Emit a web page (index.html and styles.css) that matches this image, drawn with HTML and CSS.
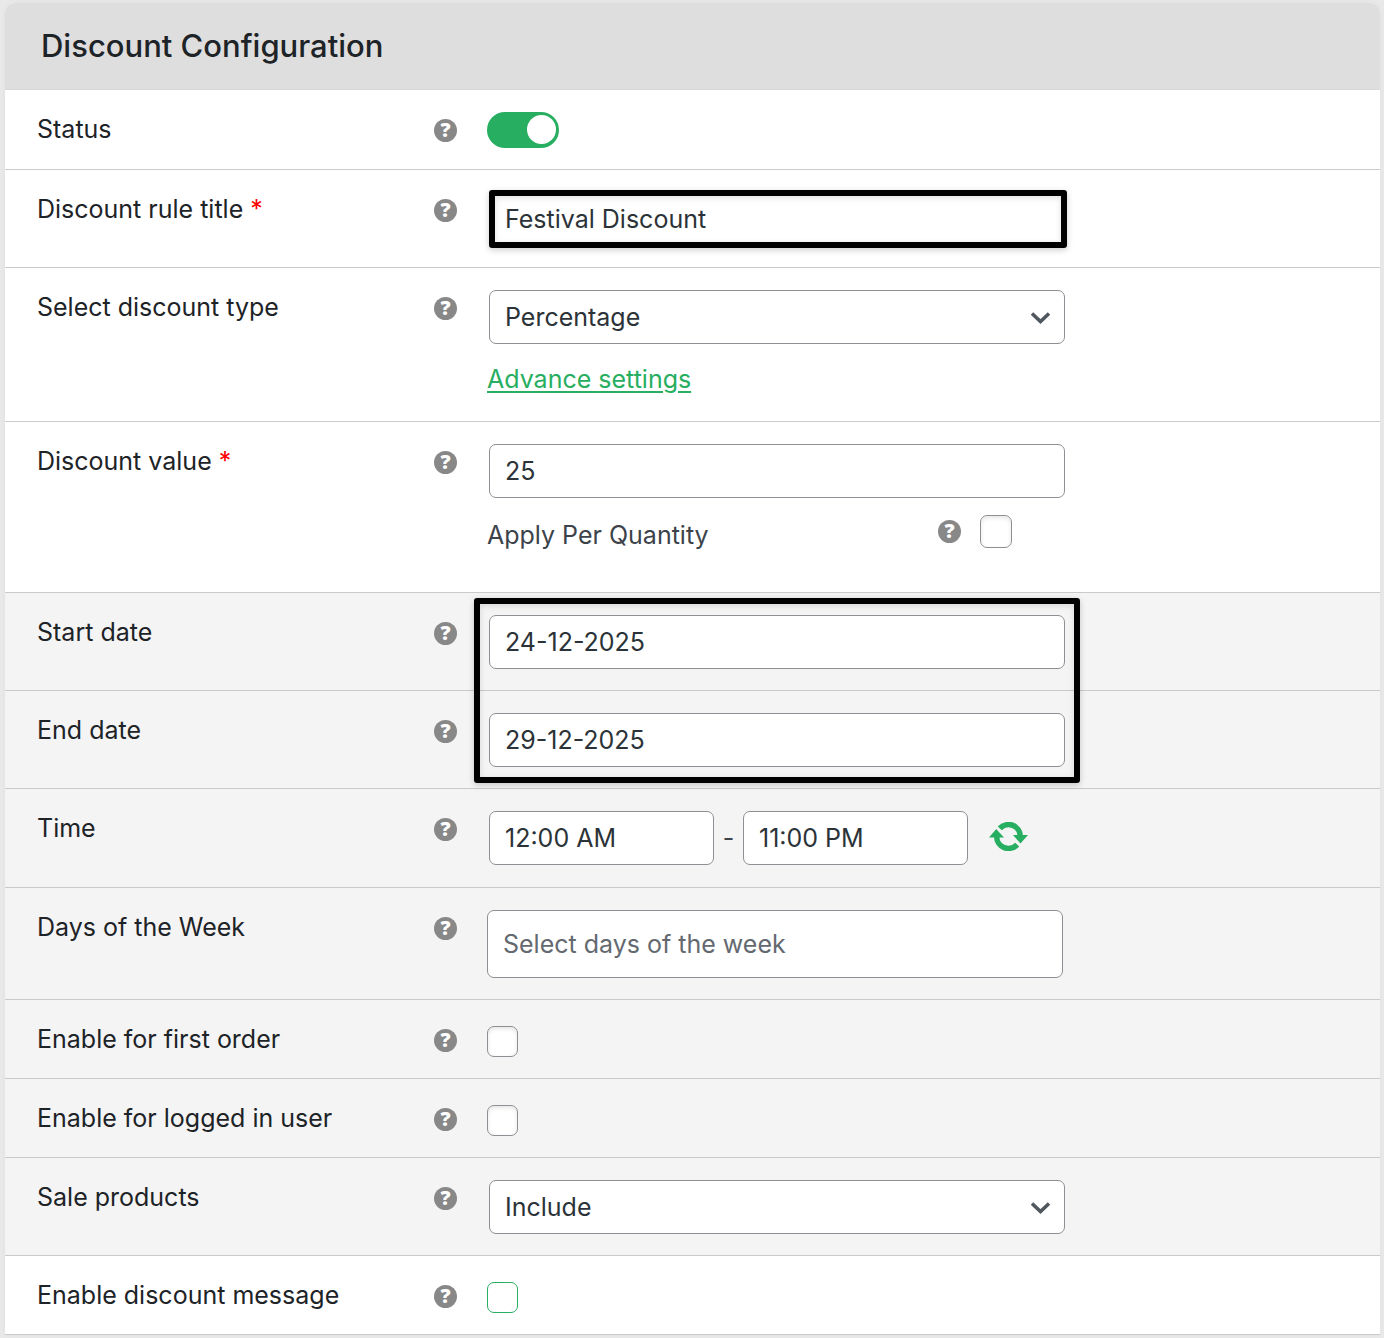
FILE: index.html
```html
<!DOCTYPE html>
<html lang="en">

<head>
    <meta charset="utf-8">
    <meta name="viewport" content="width=device-width, initial-scale=1">
    <title>Discount Configuration</title>
    <link rel="stylesheet" href="styles.css">
</head>

<body>
    <form class="panel">
        <h1 class="panel-title">Discount Configuration</h1>

        <div class="row">
            <label class="label" for="status">Status</label>
            <span class="help">?</span>
            <div class="field">
                <input type="checkbox" class="switch" id="status" checked>
            </div>
        </div>

        <div class="row">
            <label class="label" for="title">Discount rule title <span class="required">*</span></label>
            <span class="help">?</span>
            <div class="field">
                <div class="control">
                    <input type="text" class="input" id="title" value="Festival Discount">
                    <span class="frame frame-title"></span>
                </div>
            </div>
        </div>

        <div class="row">
            <label class="label" for="type">Select discount type</label>
            <span class="help">?</span>
            <div class="field">
                <div class="control">
                    <select class="input" id="type">
                        <option>Percentage</option>
                        <option>Fixed</option>
                    </select>
                    <svg class="chevron" viewBox="0 0 20 12"><path d="M1 1.5 9.500 9.500 18 1.5" fill="none" stroke="#50575e" stroke-width="3.600"/></svg>
                </div>
                <a class="advance" href="#">Advance settings</a>
            </div>
        </div>

        <div class="row">
            <label class="label" for="value">Discount value <span class="required">*</span></label>
            <span class="help">?</span>
            <div class="field">
                <div class="control">
                    <input type="text" class="input" id="value" value="25">
                </div>
                <div class="per-quantity">
                    <label for="quantity">Apply Per Quantity</label>
                    <span class="help">?</span>
                    <input type="checkbox" class="check" id="quantity">
                </div>
            </div>
        </div>

        <div class="row shaded">
            <label class="label" for="start">Start date</label>
            <span class="help">?</span>
            <div class="field">
                <div class="control">
                    <input type="text" class="input" id="start" value="24-12-2025">
                    <!-- goes round both date fields -->
                    <span class="frame frame-dates"></span>
                </div>
            </div>
        </div>

        <div class="row shaded">
            <label class="label" for="end">End date</label>
            <span class="help">?</span>
            <div class="field">
                <div class="control">
                    <input type="text" class="input" id="end" value="29-12-2025">
                </div>
            </div>
        </div>

        <div class="row shaded">
            <label class="label" for="time-from">Time</label>
            <span class="help">?</span>
            <div class="field">
                <div class="times">
                    <input type="text" class="input time" id="time-from" value="12:00 AM">
                    <span class="dash">-</span>
                    <input type="text" class="input time" id="time-to" value="11:00 PM" aria-label="Time to">
                    <button type="button" class="reset" aria-label="Reset time">
                        <svg viewBox="0 0 39 29">
                            <g fill="none" stroke="#27ae60" stroke-width="5.5">
                                <path d="M10.800 6.400A11.800 11.800 0 0 1 31.300 14.500"/>
                                <path d="M28.200 22.600A11.800 11.800 0 0 1 7.700 14.500"/>
                            </g>
                            <path d="M24 13H39L31.500 21.500zM0 15.500H15L7.200 7z" fill="#27ae60"/>
                        </svg>
                    </button>
                </div>
            </div>
        </div>

        <div class="row shaded">
            <label class="label" for="days">Days of the Week</label>
            <span class="help">?</span>
            <div class="field">
                <input type="text" class="input days" id="days" placeholder="Select days of the week">
            </div>
        </div>

        <div class="row shaded">
            <label class="label" for="first-order">Enable for first order</label>
            <span class="help">?</span>
            <div class="field">
                <input type="checkbox" class="check" id="first-order">
            </div>
        </div>

        <div class="row shaded">
            <label class="label" for="logged-in">Enable for logged in user</label>
            <span class="help">?</span>
            <div class="field">
                <input type="checkbox" class="check" id="logged-in">
            </div>
        </div>

        <div class="row shaded">
            <label class="label" for="sale">Sale products</label>
            <span class="help">?</span>
            <div class="field">
                <div class="control">
                    <select class="input" id="sale">
                        <option>Include</option>
                        <option>Exclude</option>
                    </select>
                    <svg class="chevron" viewBox="0 0 20 12"><path d="M1 1.5 9.500 9.500 18 1.5" fill="none" stroke="#50575e" stroke-width="3.600"/></svg>
                </div>
            </div>
        </div>

        <div class="row">
            <label class="label" for="message">Enable discount message</label>
            <span class="help">?</span>
            <div class="field">
                <input type="checkbox" class="check check-green" id="message">
            </div>
        </div>
    </form>
</body>

</html>
```

FILE: styles.css
```css
* {
    box-sizing: border-box;
}

body {
    margin: 0;
    padding: 3px 4px 3px 5px;
    background: #e9e9e9;
    color: #1d2327;
    font-family: Inter, "Liberation Sans", sans-serif;
    font-size: 25px;
    line-height: 34px;
}

.panel {
    background: #fff;
    border-radius: 10px 10px 0 0;
    box-shadow: 0 0 6px rgba(0, 0, 0, 0.04);
}

.panel-title {
    margin: 0;
    padding: 23px 36px;
    border-bottom: 1px solid #d8d8d8;
    border-radius: 10px 10px 0 0;
    background: #dedede;
    font-size: 31px;
    font-weight: 500;
    line-height: 40px;
}

.row {
    display: grid;
    grid-template-columns: 397px 23px 1fr;
    align-items: start;
    padding: 22px 32px 21px;
    border-bottom: 1px solid #c9cacc;
}

.shaded {
    background: #f4f4f4;
}

.required {
    color: #f00;
}

.help {
    width: 23px;
    height: 23px;
    margin-top: 7px;
    border-radius: 50%;
    background: #888;
    color: #fff;
    font-family: "Open Sans", sans-serif;
    font-size: 20px;
    font-weight: 800;
    line-height: 22px;
    text-align: center;
}

.field {
    padding-left: 30px;
}

.control {
    position: relative;
    max-width: 576px;
    margin-left: 2px;
}

.input {
    display: block;
    width: 100%;
    height: 54px;
    margin: 0;
    padding: 0 15px;
    border: 1px solid #8c8f94;
    border-radius: 7px;
    background: #fff;
    color: #2c3338;
    font: inherit;
    appearance: none;
}

.chevron {
    position: absolute;
    top: 22px;
    right: 14px;
    width: 20px;
    height: 12px;
    pointer-events: none;
}

.frame {
    position: absolute;
    border: 6px solid #000;
    border-radius: 3px;
    box-shadow: 0 2px 6px rgba(0, 0, 0, 0.2), inset 0 2px 6px rgba(0, 0, 0, 0.12);
    pointer-events: none;
}

.frame-title {
    inset: -2px -2px -2px 0;
}

.frame-dates {
    inset: -17px -15px -114px;
}

.advance {
    display: block;
    width: fit-content;
    margin: 18px 0 4px;
    color: #27ae60;
    text-decoration-thickness: 2px;
    text-underline-offset: 3px;
}

.per-quantity {
    display: flex;
    align-items: flex-start;
    max-width: 525px;
    margin: 17px 0 19px;
    color: #3c434a;
}

.per-quantity label {
    flex: 1;
    padding-top: 3px;
}

.per-quantity .help {
    margin: 5px 19px 0 0;
}

.per-quantity .check {
    width: 32px;
    height: 33px;
    margin: 0;
}

.times {
    display: flex;
    align-items: center;
    margin: 0 0 1px 2px;
}

.time {
    width: 225px;
}

.dash {
    width: 29px;
    color: #3c434a;
    text-align: center;
}

.reset {
    width: 39px;
    height: 29px;
    margin: 0 0 4px 21px;
    padding: 0;
    border: 0;
    background: none;
}

.reset svg {
    display: block;
    width: 100%;
    height: 100%;
}

.days {
    max-width: 576px;
    height: 68px;
}

.days::placeholder {
    color: #646970;
    opacity: 1;
}

.check {
    display: block;
    width: 31px;
    height: 31px;
    margin: 4px 0 0;
    border: 1px solid #8c8f94;
    border-radius: 7px;
    background: #fff;
    box-shadow: inset 0 2px 4px rgba(0, 0, 0, 0.1);
    appearance: none;
}

.check-green {
    border-color: #27ae60;
    box-shadow: none;
}

.switch {
    display: flex;
    width: 72px;
    height: 36px;
    margin: 0;
    padding: 3px;
    border-radius: 18px;
    background: #c3c4c7;
    appearance: none;
}

.switch::before {
    content: "";
    width: 29px;
    height: 29px;
    border-radius: 50%;
    background: #fff;
}

.switch:checked {
    justify-content: flex-end;
    background: #27ae60;
}
```
